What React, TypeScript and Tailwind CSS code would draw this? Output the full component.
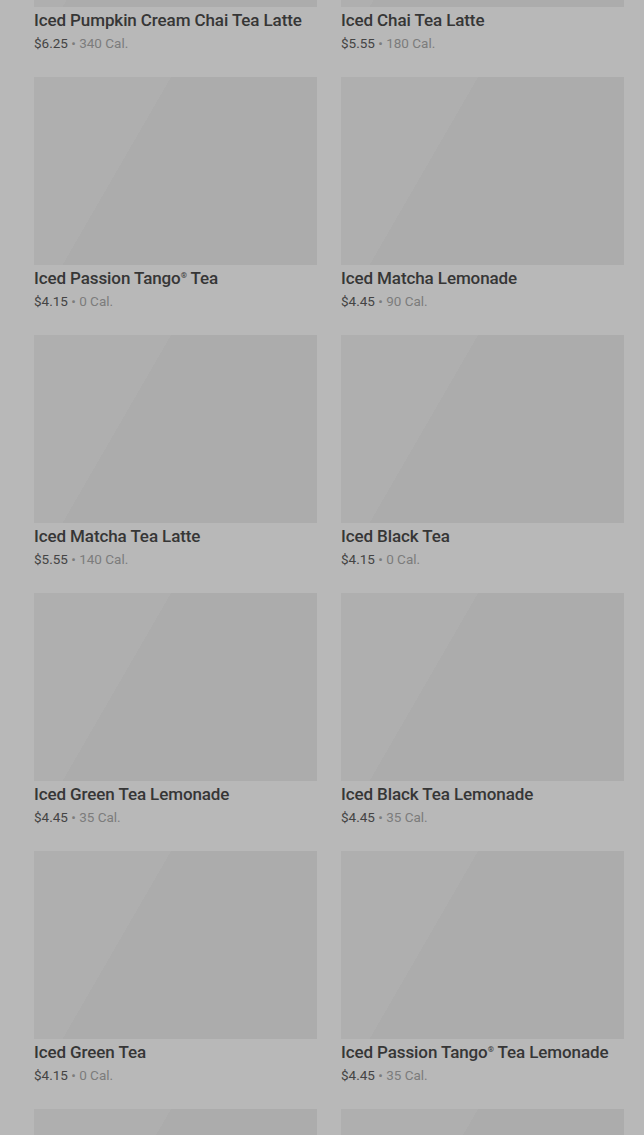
const items = [
  { name: "Iced Pumpkin Cream Chai Tea Latte", price: "$6.25", cal: "340 Cal." },
  { name: "Iced Chai Tea Latte", price: "$5.55", cal: "180 Cal." },
  { name: "Iced Passion Tango", reg: true, rest: " Tea", price: "$4.15", cal: "0 Cal." },
  { name: "Iced Matcha Lemonade", price: "$4.45", cal: "90 Cal." },
  { name: "Iced Matcha Tea Latte", price: "$5.55", cal: "140 Cal." },
  { name: "Iced Black Tea", price: "$4.15", cal: "0 Cal." },
  { name: "Iced Green Tea Lemonade", price: "$4.45", cal: "35 Cal." },
  { name: "Iced Black Tea Lemonade", price: "$4.45", cal: "35 Cal." },
  { name: "Iced Green Tea", price: "$4.15", cal: "0 Cal." },
  { name: "Iced Passion Tango", reg: true, rest: " Tea Lemonade", price: "$4.45", cal: "35 Cal." },
  { name: "", price: "", cal: "" },
  { name: "", price: "", cal: "" },
];

type Item = { name: string; reg?: boolean; rest?: string; price: string; cal: string };

function ProductCard({ name, reg, rest, price, cal }: Item) {
  return (
    <div className="flex flex-col">
      <div className="h-[188px] bg-[linear-gradient(120deg,#afafaf_0%,#afafaf_35%,#acacac_35%,#acacac_100%)]" />
      {name && (
        <>
          <p className="mt-px text-[17px] leading-[24px] font-medium text-[#363636] whitespace-nowrap tracking-[-0.1px]">
            {name}
            {reg && <span className="relative -top-[6px] text-[8px] leading-none">®</span>}
            {rest}
          </p>
          <p className="text-[13.5px] leading-[22px] text-[#444]">
            {price} <span className="text-[#7c7c7c]">• {cal}</span>
          </p>
        </>
      )}
    </div>
  );
}

export default function App() {
  return (
    <div className="h-[1135px] overflow-hidden bg-[#b8b8b8] font-['Roboto',sans-serif]">
      <div className="mt-[-181px] pl-[34px] pr-[20px] grid grid-cols-2 gap-x-[24px] gap-y-[23px]">
        {items.map((item, i) => (
          <ProductCard key={i} {...item} />
        ))}
      </div>
    </div>
  );
}
